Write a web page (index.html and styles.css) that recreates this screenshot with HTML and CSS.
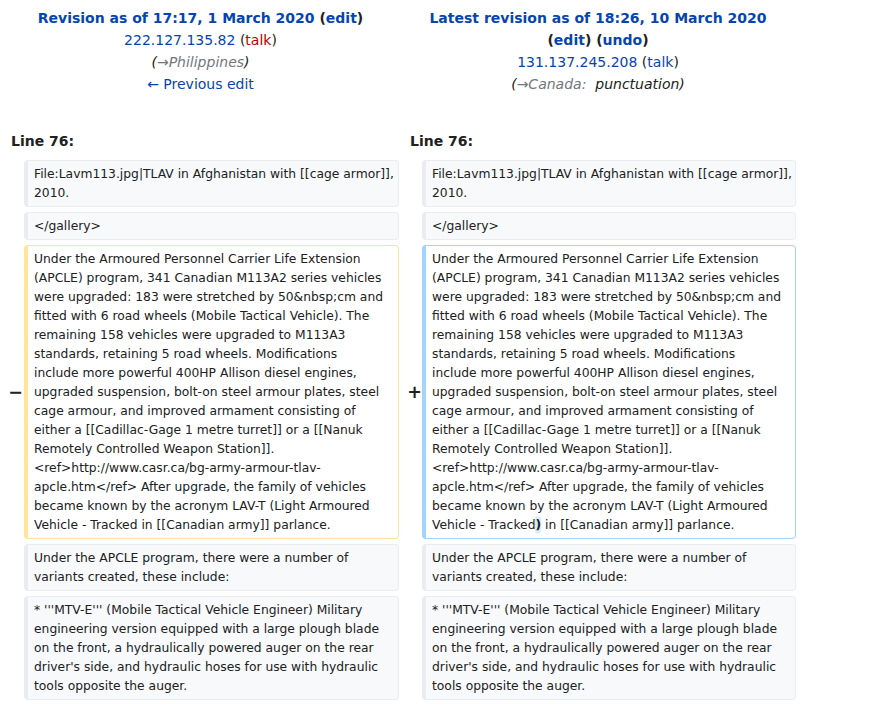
FILE: index.html
```html
<!DOCTYPE html>
<html lang="en">
<head>
<meta charset="utf-8">
<title>Diff</title>
<link rel="stylesheet" href="styles.css">
</head>
<body>
<div class="diff">
  <div class="diff-title diff-title-old">
    <div class="title-line"><a href="#">Revision as of 17:17, 1 March 2020</a> (<a href="#">edit</a>)</div>
    <div><a href="#">222.127.135.82</a> (<a href="#" class="new">talk</a>)</div>
    <div class="comment">(<span class="autocomment">→Philippines</span>)</div>
    <div><a href="#">← Previous edit</a></div>
  </div>
  <div class="diff-title diff-title-new">
    <div class="title-line"><a href="#">Latest revision as of 18:26, 10 March 2020</a> <span class="nowrap">(<a href="#">edit</a>) (<a href="#">undo</a>)</span></div>
    <div><a href="#">131.137.245.208</a> (<a href="#">talk</a>)</div>
    <div class="comment">(<span class="autocomment">→Canada:&nbsp;</span> punctuation)</div>
  </div>

  <div class="diff-lineno diff-lineno-old">Line 76:</div>
  <div class="diff-lineno diff-lineno-new">Line 76:</div>

  <div class="diff-marker"></div>
  <div class="diff-line diff-context fixed-lines">File:Lavm113.jpg|TLAV in Afghanistan with [[cage armor]],<br>2010.</div>
  <div class="diff-marker"></div>
  <div class="diff-line diff-context fixed-lines">File:Lavm113.jpg|TLAV in Afghanistan with [[cage armor]],<br>2010.</div>

  <div class="diff-marker"></div>
  <div class="diff-line diff-context">&lt;/gallery&gt;</div>
  <div class="diff-marker"></div>
  <div class="diff-line diff-context">&lt;/gallery&gt;</div>

  <div class="diff-marker diff-marker-old">−</div>
  <div class="diff-line diff-deleted fixed-lines">Under the Armoured Personnel Carrier Life Extension<br>(APCLE) program, 341 Canadian M113A2 series vehicles<br>were upgraded: 183 were stretched by 50&amp;nbsp;cm and<br>fitted with 6 road wheels (Mobile Tactical Vehicle). The<br>remaining 158 vehicles were upgraded to M113A3<br>standards, retaining 5 road wheels. Modifications<br>include more powerful 400HP Allison diesel engines,<br>upgraded suspension, bolt-on steel armour plates, steel<br>cage armour, and improved armament consisting of<br>either a [[Cadillac-Gage 1 metre turret]] or a [[Nanuk<br>Remotely Controlled Weapon Station]].<br>&lt;ref&gt;http://www.casr.ca/bg-army-armour-tlav-<br>apcle.htm&lt;/ref&gt; After upgrade, the family of vehicles<br>became known by the acronym LAV-T (Light Armoured<br>Vehicle - Tracked in [[Canadian army]] parlance.</div>
  <div class="diff-marker diff-marker-new">+</div>
  <div class="diff-line diff-added fixed-lines">Under the Armoured Personnel Carrier Life Extension<br>(APCLE) program, 341 Canadian M113A2 series vehicles<br>were upgraded: 183 were stretched by 50&amp;nbsp;cm and<br>fitted with 6 road wheels (Mobile Tactical Vehicle). The<br>remaining 158 vehicles were upgraded to M113A3<br>standards, retaining 5 road wheels. Modifications<br>include more powerful 400HP Allison diesel engines,<br>upgraded suspension, bolt-on steel armour plates, steel<br>cage armour, and improved armament consisting of<br>either a [[Cadillac-Gage 1 metre turret]] or a [[Nanuk<br>Remotely Controlled Weapon Station]].<br>&lt;ref&gt;http://www.casr.ca/bg-army-armour-tlav-<br>apcle.htm&lt;/ref&gt; After upgrade, the family of vehicles<br>became known by the acronym LAV-T (Light Armoured<br>Vehicle - Tracked<ins class="diffchange">)</ins> in [[Canadian army]] parlance.</div>

  <div class="diff-marker"></div>
  <div class="diff-line diff-context">Under the APCLE program, there were a number of variants created, these include:</div>
  <div class="diff-marker"></div>
  <div class="diff-line diff-context">Under the APCLE program, there were a number of variants created, these include:</div>

  <div class="diff-marker"></div>
  <div class="diff-line diff-context">* '''MTV-E''' (Mobile Tactical Vehicle Engineer) Military engineering version equipped with a large plough blade on the front, a hydraulically powered auger on the rear driver's side, and hydraulic hoses for use with hydraulic tools opposite the auger.</div>
  <div class="diff-marker"></div>
  <div class="diff-line diff-context">* '''MTV-E''' (Mobile Tactical Vehicle Engineer) Military engineering version equipped with a large plough blade on the front, a hydraulically powered auger on the rear driver's side, and hydraulic hoses for use with hydraulic tools opposite the auger.</div>
</div>
</body>
</html>
```

FILE: styles.css
```css
html, body {
  margin: 0;
  padding: 0;
  background: #ffffff;
}

body {
  font-family: "DejaVu Sans", sans-serif;
  font-size: 14px;
  color: #202122;
}

a {
  color: #0645ad;
  text-decoration: none;
}

a.new {
  color: #ba0000;
}

.diff {
  display: grid;
  grid-template-columns: 16px 375px 23px 374px;
  row-gap: 5px;
  margin: 7px 0 0 8px;
}

.diff-title {
  grid-column: span 2;
  text-align: center;
  line-height: 22px;
}

.diff-title-old {
  padding-right: 6px;
}

.diff-title-new {
  padding-left: 1px;
}

.title-line {
  font-weight: bold;
}

.nowrap {
  white-space: nowrap;
}

.comment {
  font-style: italic;
}

.autocomment {
  color: #72777d;
}

.diff-lineno {
  grid-column: span 2;
  font-weight: bold;
  line-height: 22px;
  margin-top: 30px;
  padding-bottom: 3px;
}

.diff-lineno-old {
  padding-left: 3px;
}

.diff-lineno-new {
  padding-left: 11px;
}

.diff-marker {
  display: flex;
  align-items: center;
  justify-content: flex-end;
  font-weight: bold;
  font-size: 17.5px;
  line-height: 1.2;
  padding-right: 1px;
}

.diff-marker-new {
  padding-right: 0;
}

.diff-line {
  font-size: 12.32px;
  line-height: 19px;
  padding: 3.5px 6px;
  border-style: solid;
  border-width: 1px 1px 1px 4px;
  border-radius: 4px;
  overflow-wrap: break-word;
  color: #202122;
}

.fixed-lines {
  white-space: nowrap;
}

.diff-context {
  background: #f8f9fa;
  border-color: #eaecf0;
}

.diff-deleted {
  background: #ffffff;
  border-color: #ffe49c;
}

.diff-added {
  background: #ffffff;
  border-color: #a3d3ff;
}

.diffchange {
  text-decoration: none;
  font-weight: bold;
  background: #d8ecff;
  border-radius: 2px;
  box-shadow: 0 -1.5px 0 #d8ecff, 0 1.5px 0 #d8ecff;
}
```
